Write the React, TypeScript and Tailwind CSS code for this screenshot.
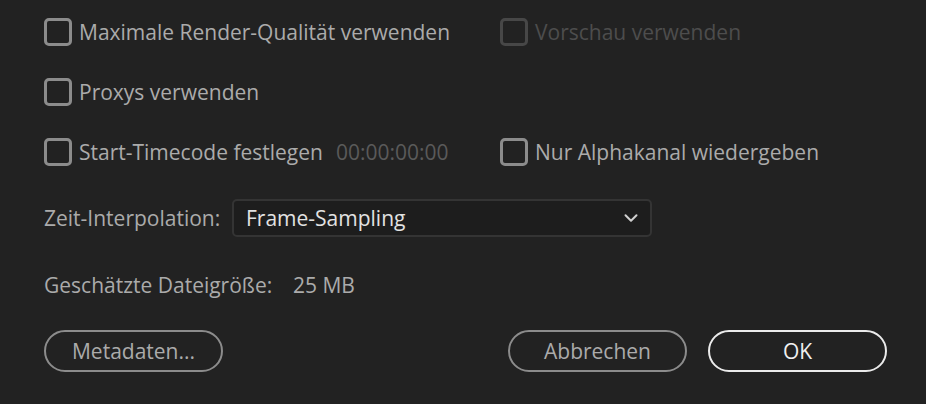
import { ChevronDown } from 'lucide-react'

type CheckProps = {
  label: string
  disabled?: boolean
  extra?: string
}

function Check({ label, disabled, extra }: CheckProps) {
  return (
    <label className="flex items-center h-[28px]">
      <span
        className={`w-[28px] h-[28px] rounded-[5px] border-[3px] shrink-0 ${
          disabled ? 'border-[#474747]' : 'border-[#8c8c8c]'
        }`}
      />
      <span className={`ml-[7px] ${disabled ? 'text-[#4d4d4d]' : 'text-[#ababab]'}`}>{label}</span>
      {extra && <span className="ml-[13px] text-[#5a5a5a]">{extra}</span>}
    </label>
  )
}

export default function App() {
  return (
    <div
      className="w-[926px] h-[404px] bg-[#222222] text-[21px] leading-[28px] pl-[44px] pt-[18px] overflow-hidden"
      style={{ fontFamily: '"Open Sans", "Noto Sans", sans-serif' }}
    >
      <div className="grid grid-cols-[456px_1fr] gap-y-[32px]">
        <Check label="Maximale Render-Qualität verwenden" />
        <Check label="Vorschau verwenden" disabled />
        <Check label="Proxys verwenden" />
        <div />
        <Check label="Start-Timecode festlegen" extra="00:00:00:00" />
        <Check label="Nur Alphakanal wiedergeben" />
      </div>

      <div className="flex items-center mt-[33px]">
        <span className="text-[#ababab] w-[188px]">Zeit-Interpolation:</span>
        <div className="w-[420px] h-[38px] rounded-[5px] border-2 border-[#343434] bg-[#1d1d1d] flex items-center justify-between pl-[12px] pr-[8px]">
          <span className="text-[#e2e2e2]">Frame-Sampling</span>
          <ChevronDown size={22} strokeWidth={2.2} className="text-[#d0d0d0]" />
        </div>
      </div>

      <div className="flex items-center mt-[33px] h-[30px]">
        <span className="text-[#ababab] w-[249px]">Geschätzte Dateigröße:</span>
        <span className="text-[#ababab]">25 MB</span>
      </div>

      <div className="flex items-center mt-[30px] pr-[39px]">
        <button className="w-[179px] h-[42px] rounded-full border-2 border-[#8c8c8c] text-[#ababab]">
          Metadaten...
        </button>
        <div className="flex-1" />
        <button className="w-[179px] h-[42px] rounded-full border-2 border-[#8c8c8c] text-[#ababab]">
          Abbrechen
        </button>
        <button className="w-[179px] h-[42px] rounded-full border-2 border-[#ebebeb] text-[#f0f0f0] ml-[21px]">
          OK
        </button>
      </div>
    </div>
  )
}
